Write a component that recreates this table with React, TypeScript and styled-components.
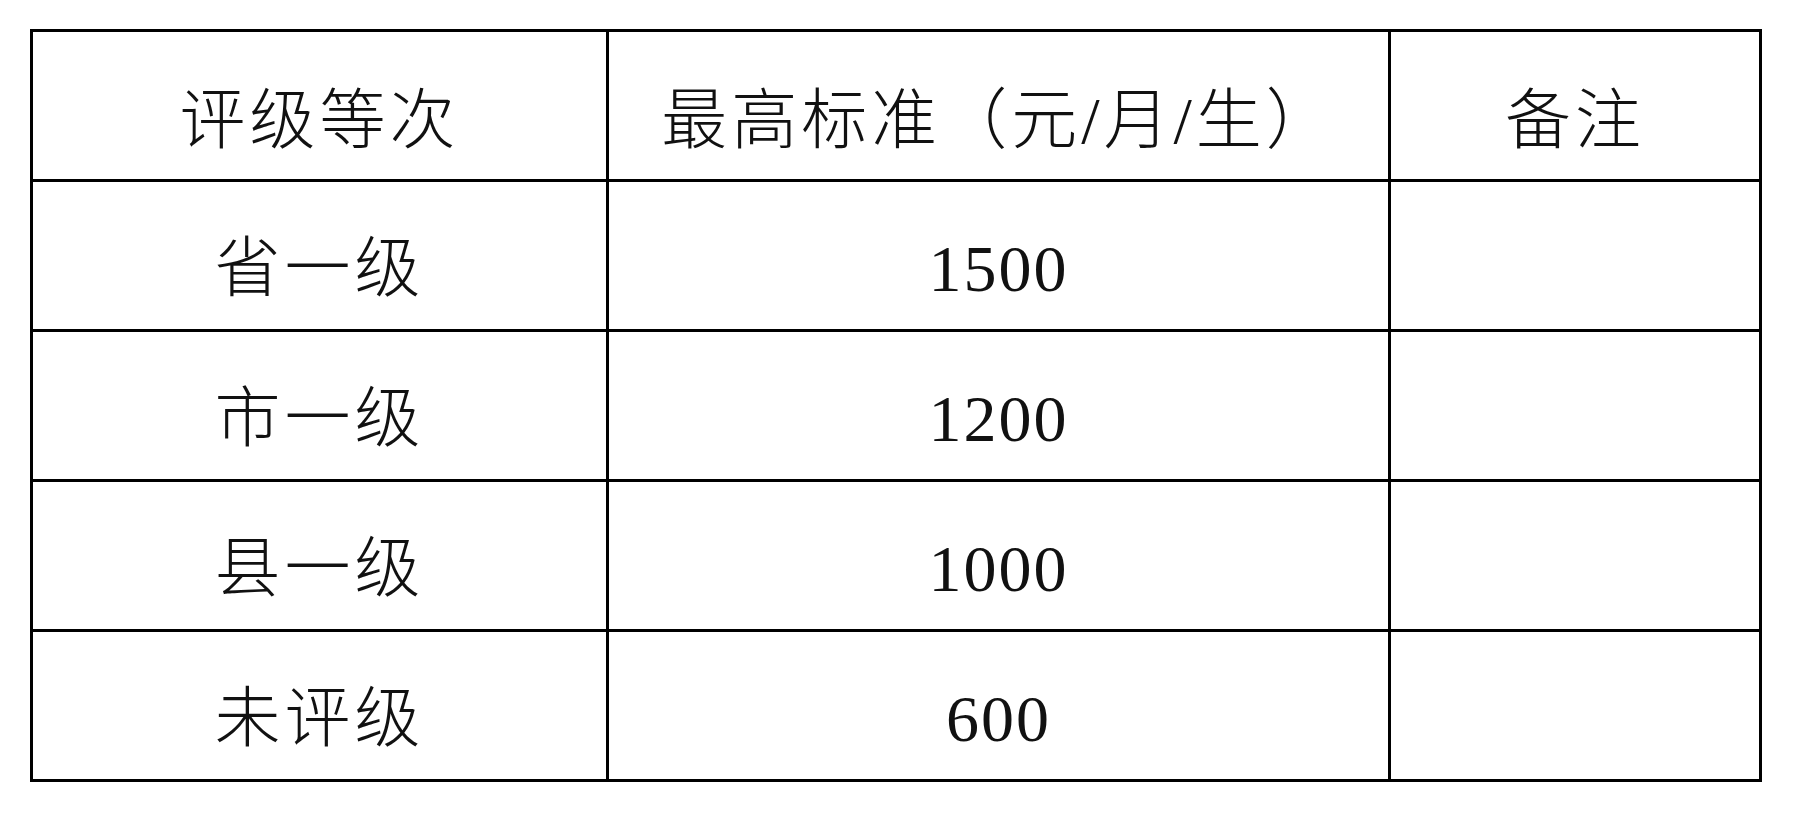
import React from 'react';
import styled, { createGlobalStyle } from 'styled-components';

const GlobalStyle = createGlobalStyle`
  html, body {
    margin: 0;
    padding: 0;
    background: #ffffff;
  }
`;

const Page = styled.div`
  padding: 29px 0 0 30px;
`;

const Table = styled.div`
  display: grid;
  grid-template-columns: 573px 779px 368px;
  grid-auto-rows: 147px;
  gap: 3px;
  padding: 3px;
  width: max-content;
  background: #000000;
`;

const Cell = styled.div<{ $numeric?: boolean; $head?: boolean }>`
  display: flex;
  align-items: center;
  justify-content: center;
  padding-top: ${(p) => (p.$head ? '30px' : '26px')};
  box-sizing: border-box;
  background: #ffffff;
  color: #111111;
  font-family: "Liberation Serif", "Noto Sans CJK SC", serif;
  font-size: 66px;
  font-weight: 300;
  line-height: 1;
  white-space: nowrap;
  letter-spacing: ${(p) => (p.$numeric ? '2px' : '4px')};
`;

const header = ['评级等次', '最高标准（元/月/生）', '备注'];

const rows = [
  { level: '省一级', amount: '1500' },
  { level: '市一级', amount: '1200' },
  { level: '县一级', amount: '1000' },
  { level: '未评级', amount: '600' },
];

const App: React.FC = () => {
  return (
    <>
      <GlobalStyle />
      <Page>
        <Table>
          {header.map((h) => (
            <Cell key={h} $head>
              {h}
            </Cell>
          ))}
          {rows.map((r) => (
            <React.Fragment key={r.level}>
              <Cell>{r.level}</Cell>
              <Cell $numeric>{r.amount}</Cell>
              <Cell />
            </React.Fragment>
          ))}
        </Table>
      </Page>
    </>
  );
};

export default App;
